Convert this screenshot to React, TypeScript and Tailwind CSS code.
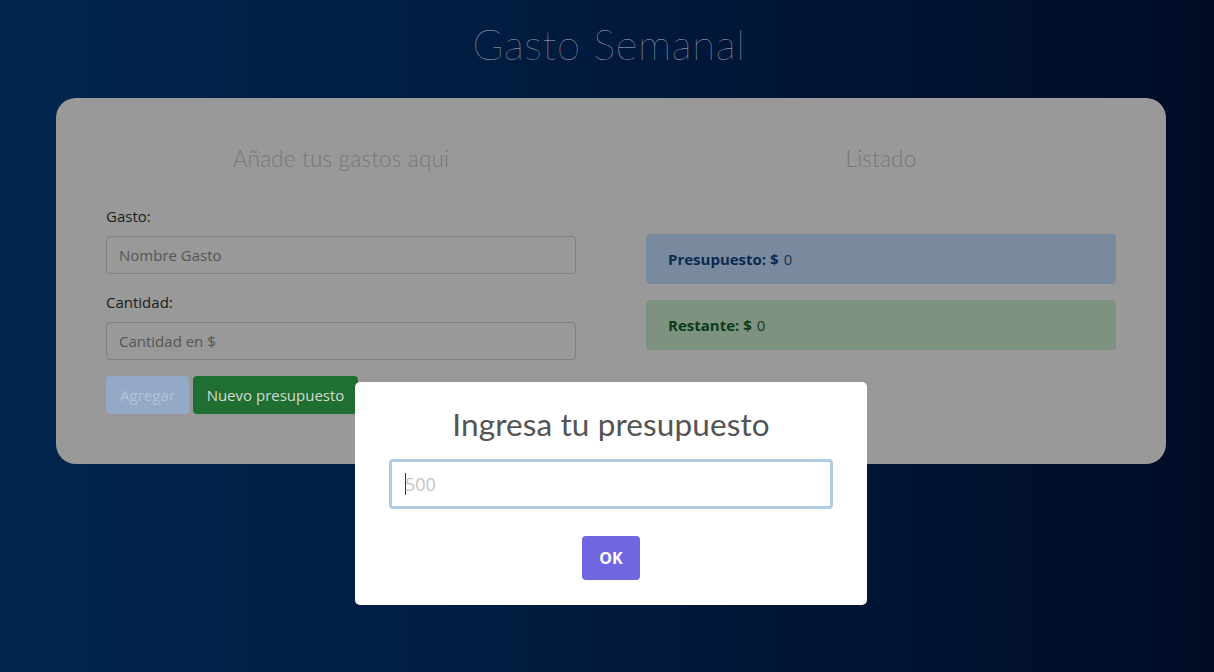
import React from 'react';

const sans = { fontFamily: '"Open Sans", "Noto Sans", sans-serif' };
const thin = { fontFamily: 'Lato, "Open Sans", sans-serif' };

export default function App() {
  return (
    <div
      className="relative h-[672px] w-full overflow-hidden bg-gradient-to-r from-[#02264f] via-[#011a3d] to-[#000c26]"
      style={sans}
    >
      {/* Page (dimmed behind the dialog) */}
      <h1
        className="pt-[19px] pl-[4px] text-center text-[42px] font-extralight leading-[50px] tracking-[0.6px] text-[#aab4c0]"
        style={thin}
      >
        Gasto Semanal
      </h1>

      <div className="ml-[56px] mt-[29px] w-[1110px] rounded-[20px] bg-[#999999] px-[50px] pt-[44px] pb-[50px]">
        <div className="grid grid-cols-2 gap-[70px]">
          {/* Left column */}
          <div>
            <h2
              className="text-center text-[22.5px] font-light leading-[34px] tracking-[0.2px] text-[#777777]"
              style={thin}
            >
              Añade tus gastos aqui
            </h2>
            <div className="mt-[28px] text-[15px] leading-[24px] text-[#1c1c1c]">Gasto:</div>
            <div className="mt-[8px] flex h-[38px] items-center rounded-[4px] border border-[#7f7f7f] px-[12px] text-[15px] text-[#555555]">
              Nombre Gasto
            </div>
            <div className="mt-[16px] text-[15px] leading-[24px] text-[#1c1c1c]">Cantidad:</div>
            <div className="mt-[8px] flex h-[38px] items-center rounded-[4px] border border-[#7f7f7f] px-[12px] text-[15px] text-[#555555]">
              Cantidad en $
            </div>
            <div className="mt-[16px] flex gap-[4px]">
              <div className="flex h-[38px] w-[83px] items-center justify-center rounded-[4px] bg-[#93a9c5] text-[15px] text-[#b3c3d7]">
                Agregar
              </div>
              <div className="flex h-[38px] w-[165px] items-center justify-center rounded-[4px] bg-[#1e6f31] text-[15px] text-[#d3dcd4]">
                Nuevo presupuesto
              </div>
            </div>
          </div>

          {/* Right column */}
          <div>
            <h2
              className="text-center text-[22.5px] font-light leading-[34px] tracking-[0.2px] text-[#777777]"
              style={thin}
            >
              Listado
            </h2>
            <div className="mt-[58px] flex h-[50px] items-center rounded-[4px] border border-[#7388a0] bg-[#798a9f] px-[21px] text-[15px] text-[#1c3350]">
              <b className="mr-[5px] text-[#0b2a50]">Presupuesto: $</b>0
            </div>
            <div className="mt-[16px] flex h-[50px] items-center rounded-[4px] border border-[#77907c] bg-[#7e9282] px-[21px] text-[15px] text-[#1c3a22]">
              <b className="mr-[5px] text-[#0c3a17]">Restante: $</b>0
            </div>
          </div>
        </div>
      </div>

      {/* Dialog */}
      <div className="absolute left-[355px] top-[382px] flex h-[223px] w-[512px] flex-col items-center rounded-[5px] bg-white">
        <h2
          className="mt-[21px] text-[31.5px] leading-[42px] tracking-[0.1px] text-[#545454]"
          style={thin}
        >
          Ingresa tu presupuesto
        </h2>
        <div className="mt-[14px] flex h-[50px] w-[444px] items-center rounded-[4px] border-[3px] border-[#b1cbe0] px-[13px] text-[18px] text-[#c4c4c4]">
          <span className="mr-[-1px] inline-block h-[22px] w-[1px] bg-[#333333]" />
          500
        </div>
        <div
          className="mt-[27px] flex h-[44px] w-[58px] items-center justify-center rounded-[4px] bg-[#7066e0] text-[16px] font-bold text-white"
          style={sans}
        >
          OK
        </div>
      </div>
    </div>
  );
}
